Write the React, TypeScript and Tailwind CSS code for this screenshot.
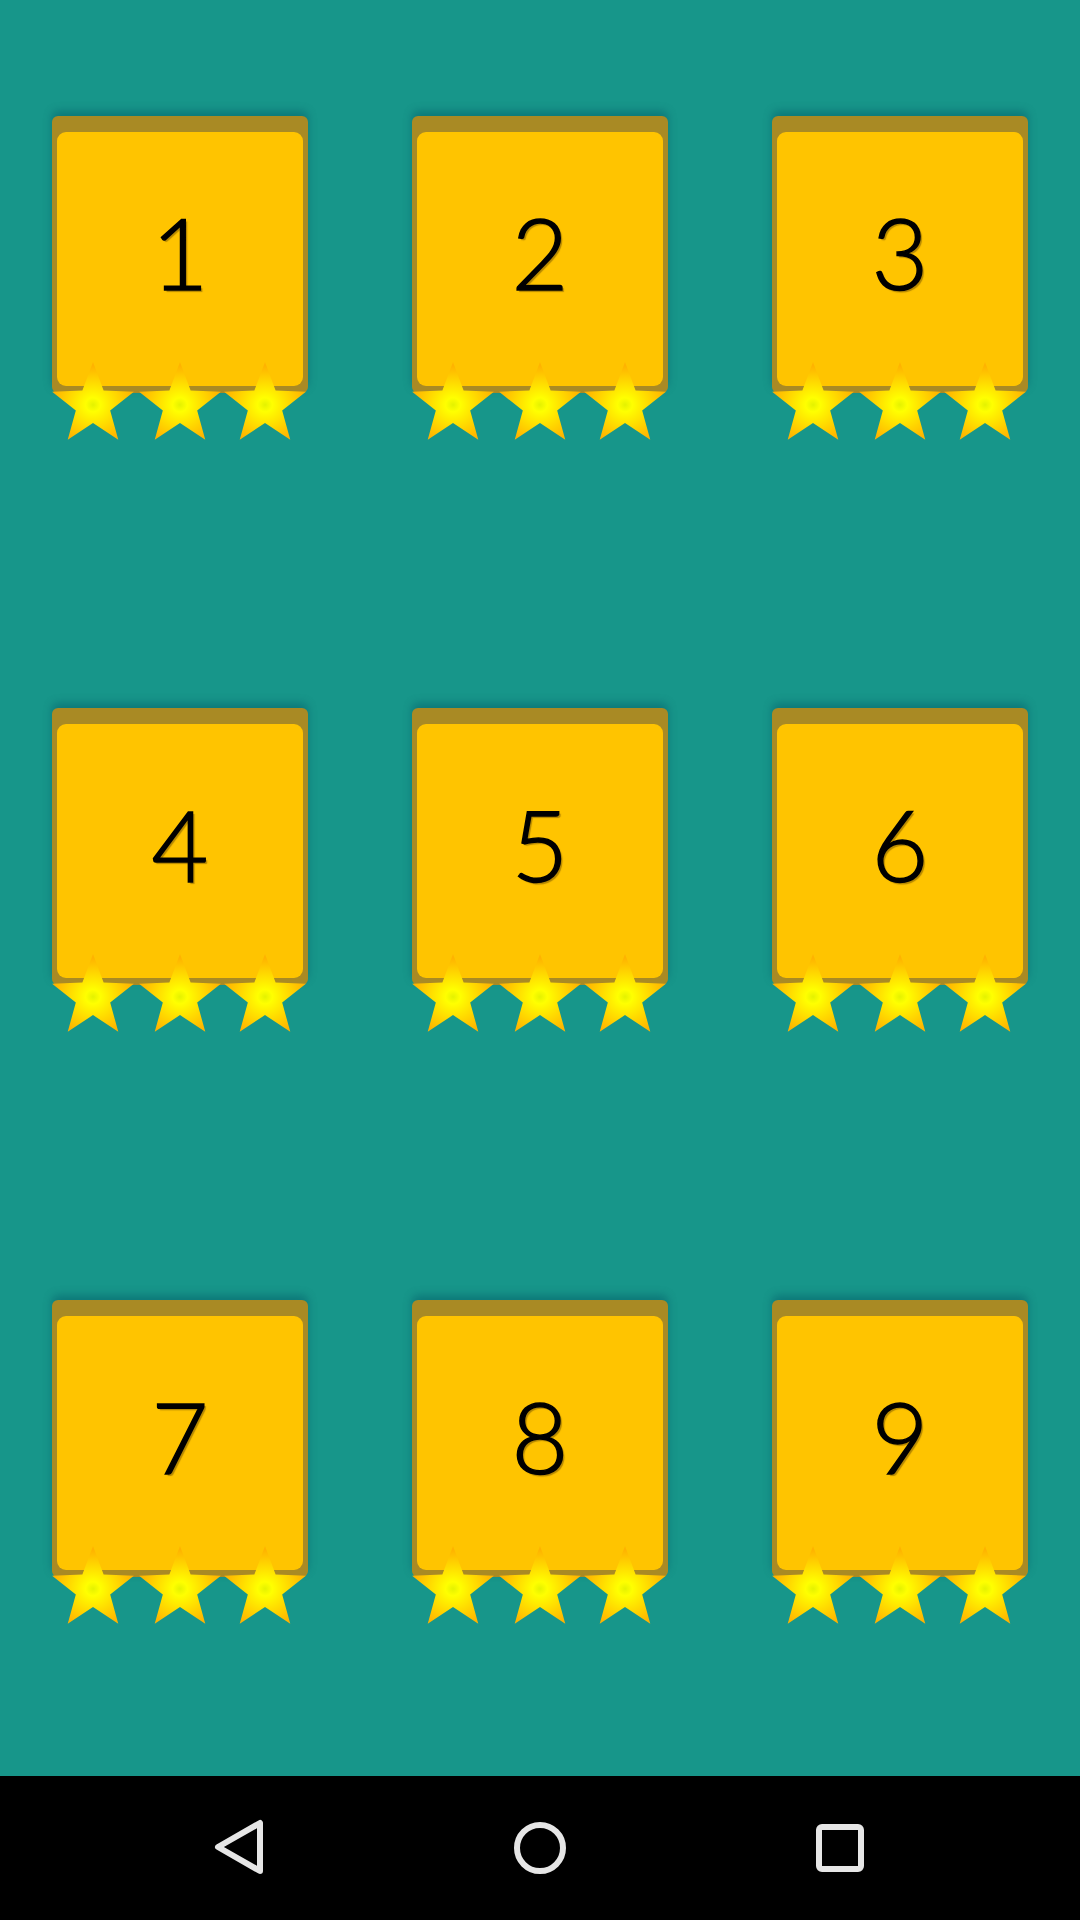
const LEVELS = [1, 2, 3, 4, 5, 6, 7, 8, 9];

function starPoints(cx: number, cy: number, r: number, inner: number) {
  const pts: string[] = [];
  for (let i = 0; i < 10; i++) {
    const rad = i % 2 === 0 ? r : r * inner;
    const a = (Math.PI / 5) * i - Math.PI / 2;
    pts.push(`${(cx + rad * Math.cos(a)).toFixed(2)},${(cy + rad * Math.sin(a)).toFixed(2)}`);
  }
  return pts.join(' ');
}

function Stars({ id }: { id: number }) {
  const r = 43;
  return (
    <svg width="256" height="80" viewBox="0 0 256 80" className="block">
      <defs>
        <radialGradient id={`star-${id}`} cx="50%" cy="55%" r="50%">
          <stop offset="0%" stopColor="#e4f200" />
          <stop offset="18%" stopColor="#ffff00" />
          <stop offset="60%" stopColor="#ffd800" />
          <stop offset="100%" stopColor="#ffb300" />
        </radialGradient>
      </defs>
      {[41, 128, 213].map(cx => (
        <polygon key={cx} points={starPoints(cx, r, r, 0.42)} fill={`url(#star-${id})`} />
      ))}
    </svg>
  );
}

function LevelTile({ n }: { n: number }) {
  return (
    <div className="relative w-[256px] h-[324px]">
      <div className="h-[277px] rounded-[6px] bg-[#a98a24] pt-[16px] px-[5px] pb-[7px] shadow-[0_-5px_8px_rgba(0,85,100,0.45)]">
        <div className="h-full rounded-[9px] bg-[#ffc400] flex items-center justify-center pb-[14px]">
          <span className="text-[98px] leading-none font-light text-black font-['Lato','Open_Sans',sans-serif] [-webkit-text-stroke:1.5px_black] [text-shadow:2px_2px_1px_rgba(150,110,0,0.7)]">
            {n}
          </span>
        </div>
      </div>
      <div className="absolute left-0 top-[246px]">
        <Stars id={n} />
      </div>
    </div>
  );
}

export default function App() {
  return (
    <div className="w-[1080px] h-[1920px] flex flex-col bg-[#17968a]">
      <div className="h-[1776px] grid grid-cols-3 grid-rows-3">
        {LEVELS.map(n => (
          <div key={n} className="flex justify-center pt-[116px]">
            <LevelTile n={n} />
          </div>
        ))}
      </div>
      <div className="h-[144px] bg-black flex items-center justify-center gap-[240px]">
        <svg width="60" height="60" viewBox="0 0 60 60">
          <path d="M50 5 L50 53 L8 29 Z" fill="none" stroke="#e6e6e6" strokeWidth="6" strokeLinejoin="round" />
        </svg>
        <svg width="60" height="60" viewBox="0 0 60 60">
          <circle cx="30" cy="30" r="23" fill="none" stroke="#e6e6e6" strokeWidth="6" />
        </svg>
        <svg width="60" height="60" viewBox="0 0 60 60">
          <rect x="9" y="9" width="42" height="42" rx="3" fill="none" stroke="#e6e6e6" strokeWidth="6" />
        </svg>
      </div>
    </div>
  );
}
